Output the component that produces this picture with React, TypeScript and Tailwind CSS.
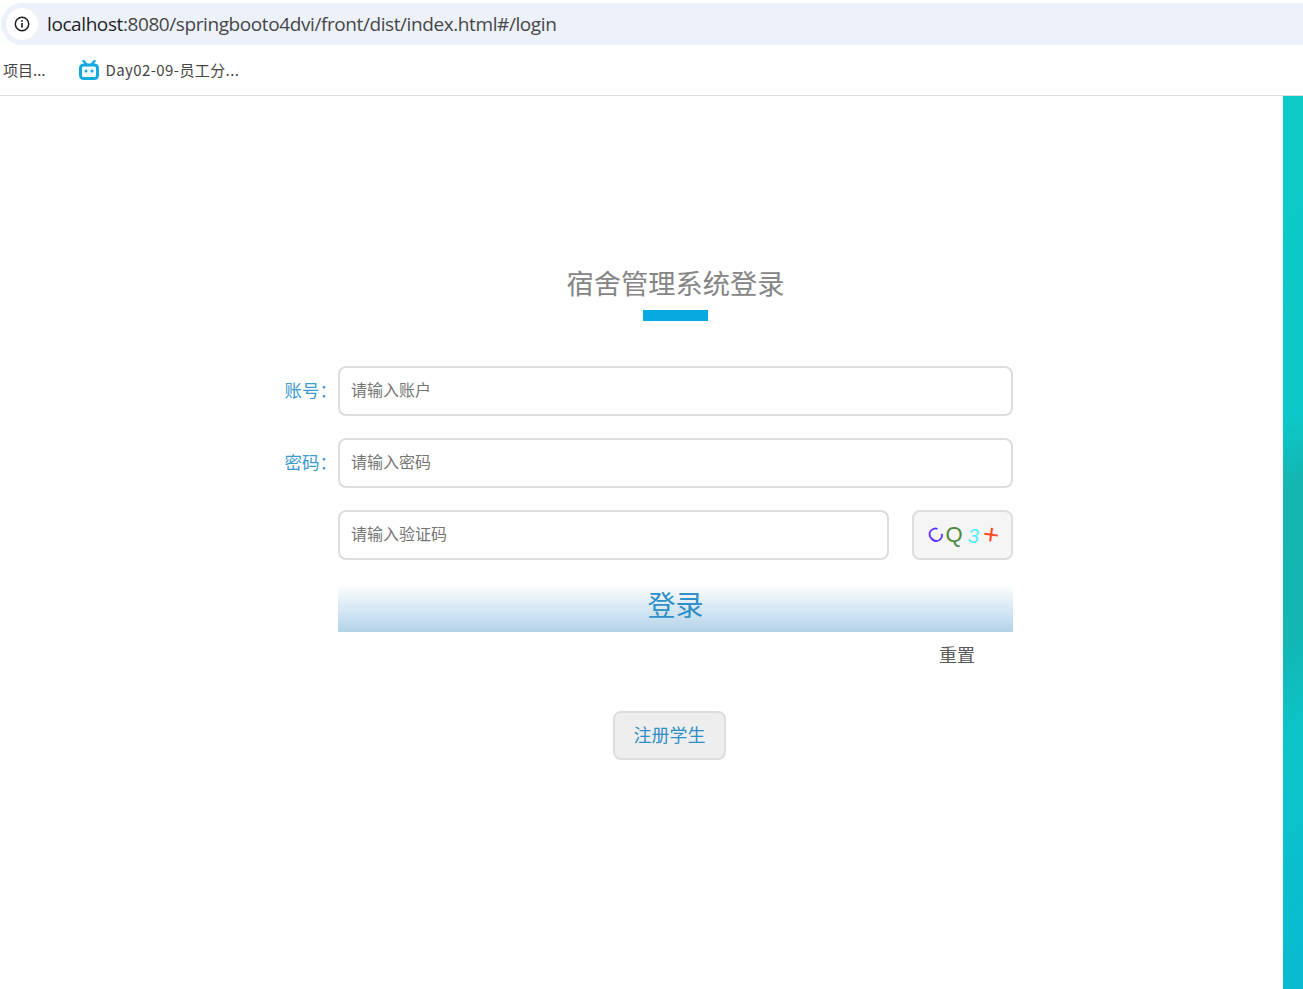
const cjk = "font-['Noto_Sans_CJK_SC','Noto_Sans',sans-serif]";

function BiliIcon() {
  return (
    <svg width="22" height="20" viewBox="0 0 22 20" fill="none" className="block">
      <path d="M5.5 1 9 5M16.5 1 13 5" stroke="#14a9e0" strokeWidth="2.4" strokeLinecap="round" />
      <rect x="2.5" y="5" width="17" height="13.5" rx="3" stroke="#14a9e0" strokeWidth="3" fill="#f2fafe" />
      <circle cx="8" cy="11" r="1.5" fill="#14a9e0" />
      <circle cx="14" cy="11" r="1.5" fill="#14a9e0" />
    </svg>
  );
}

function InfoIcon() {
  return (
    <svg width="16" height="16" viewBox="0 0 16 16" fill="none" className="block">
      <circle cx="8" cy="8" r="6.7" stroke="#1f1f1f" strokeWidth="1.5" />
      <rect x="7.2" y="7" width="1.6" height="4.6" fill="#1f1f1f" />
      <rect x="7.2" y="4.2" width="1.6" height="1.6" fill="#1f1f1f" />
    </svg>
  );
}

function Field({ label, placeholder }: { label: string; placeholder: string }) {
  return (
    <div className="flex items-center h-[50px] mb-[22px]">
      <label className="w-[60px] pr-[1px] pb-[2px] text-right text-[17.5px] text-[#3d9bd0] whitespace-nowrap">{label}</label>
      <input
        placeholder={placeholder}
        className={`${cjk} w-[675px] h-[50px] border-2 border-[#dddddd] rounded-[8px] px-[11px] pb-[4px] text-[16px] bg-white placeholder:text-[#757575] outline-none`}
      />
    </div>
  );
}

export default function App() {
  return (
    <div className={`${cjk} h-[989px] bg-white overflow-hidden flex flex-col`}>
      {/* browser chrome */}
      <div className="h-[96px] border-b border-[#dfdfdf] shrink-0 pt-[3px]">
        <div className="h-[42px] ml-[1px] bg-[#edf1fa] rounded-l-[21px] flex items-center pl-[5px]">
          <div className="w-[32px] h-[32px] rounded-full bg-white flex items-center justify-center">
            <InfoIcon />
          </div>
          <div className="ml-[9px] text-[19px] font-['Open_Sans',sans-serif] tracking-[-0.41px] text-[#474747] whitespace-nowrap">
            <span className="text-[#1f1f1f]">localhost</span>:8080/springbooto4dvi/front/dist/index.html#/login
          </div>
        </div>
        <div className="h-[50px] flex items-center text-[15px] text-[#444444]">
          <span className="ml-[3px]">项目...</span>
          <span className="ml-[32px] mr-[6px]"><BiliIcon /></span>
          <span className="tracking-[0.4px]">Day02-09-员工分...</span>
        </div>
      </div>

      <div className="flex-1 flex">
        <div className="flex-1 pl-[278px] pt-[169px]">
          {/* title */}
          <div className="w-[735px] pl-[60px] flex flex-col items-center">
            <h1 className="text-[27.25px] leading-[34px] text-[#858585] font-normal">宿舍管理系统登录</h1>
            <div className="w-[65px] h-[11px] bg-[#08a9e1] mt-[11px] mb-[45px]" />
          </div>

          <Field label="账号：" placeholder="请输入账户" />
          <Field label="密码：" placeholder="请输入密码" />

          {/* captcha */}
          <div className="flex items-center h-[50px] pl-[60px] mb-[24px]">
            <input
              placeholder="请输入验证码"
              className={`${cjk} w-[551px] h-[50px] border-2 border-[#dddddd] rounded-[8px] px-[11px] pb-[4px] text-[16px] bg-white placeholder:text-[#757575] outline-none`}
            />
            <div className="ml-[23px] w-[101px] h-[50px] border-2 border-[#dddddd] rounded-[8px] bg-[#f5f5f5] flex items-center pl-[14px] font-['Liberation_Sans',sans-serif] leading-none">
              <span className="text-[20px] font-light text-[#5a33ff] -rotate-[40deg]">C</span>
              <span className="ml-[3px] text-[22px] text-[#4f8a3c]">Q</span>
              <span className="ml-[5px] text-[21px] italic text-[#55eeff]">3</span>
              <span className="ml-[4px] text-[28px] font-light text-[#ff4a22] rotate-[8deg]">+</span>
            </div>
          </div>

          {/* actions */}
          <div className="pl-[60px] w-[735px] flex flex-col">
            <button className="h-[48px] pb-[7px] bg-gradient-to-b from-white to-[#b2d3e8] text-[28px] leading-[41px] text-[#2f8fc6]">
              登录
            </button>
            <button className="self-end mr-[38px] mt-[11px] text-[18px] leading-[22px] text-[#5a5a5a]">重置</button>
            <button className="self-start ml-[275px] mt-[46px] pb-[2px] w-[113px] h-[49px] border-2 border-[#dddddd] rounded-[8px] bg-[#eeeeee] text-[18px] text-[#2f8fc6]">
              注册学生
            </button>
          </div>
        </div>

        {/* edge of the background picture */}
        <div className="w-[20px] shrink-0 bg-[linear-gradient(155deg,#0ccbc6_0%,#0cc8c8_36%,#14b4b0_44%,#12b6b3_60%,#0cc5c9_72%,#09b9d1_100%)]" />
      </div>
    </div>
  );
}
